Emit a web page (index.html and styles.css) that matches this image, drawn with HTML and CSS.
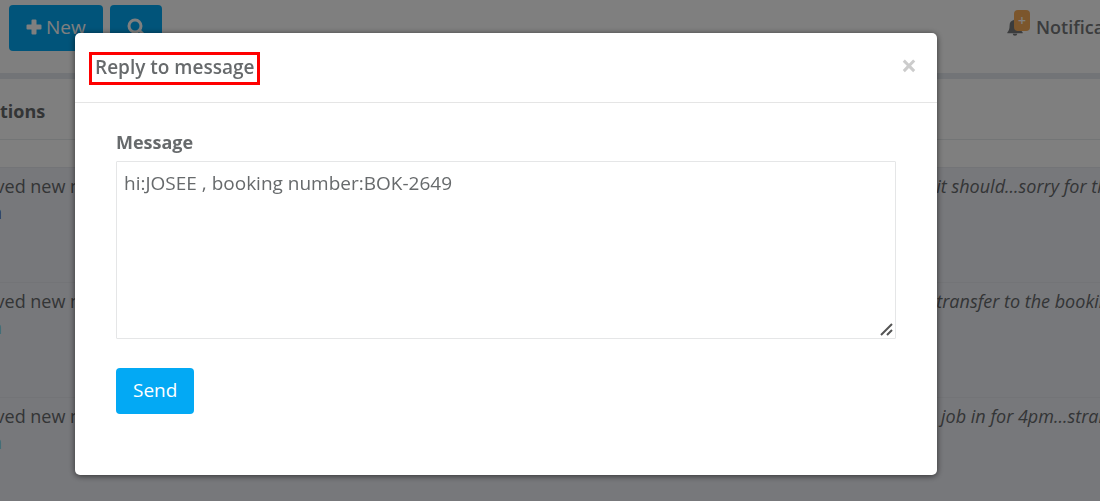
FILE: index.html
```
<!DOCTYPE html>
<html lang="en">
<head>
    <meta charset="UTF-8">
    <meta name="viewport" content="width=device-width, initial-scale=1.0">
    <title>Notifications</title>
    <link rel="stylesheet" href="styles.css">
</head>
<body>
    <div class="page">
        <header class="topbar">
            <div class="toolbar">
                <button type="button" class="btn">
                    <svg class="icon" width="16" height="16" viewBox="0 0 16 16" aria-hidden="true"><path d="M5.500 1.500Q5.500.5 6.500.5h3q1 0 1 1v4h4q1 0 1 1v3q0 1-1 1h-4v4q0 1-1 1h-3q-1 0-1-1v-4h-4q-1 0-1-1v-3q0-1 1-1h4z" fill="currentColor"/></svg>
                    New
                </button>
                <button type="button" class="btn" aria-label="Search">
                    <svg class="icon" width="18" height="18" viewBox="0 0 18 18" aria-hidden="true" fill="none" stroke="currentColor"><circle cx="8" cy="8" r="6" stroke-width="3"/><path d="M12.500 12.500l4 4" stroke-width="3" stroke-linecap="round"/></svg>
                </button>
            </div>
            <a href="#" class="notify">
                <span class="bell">
                    <svg width="18" height="18" viewBox="0 0 18 20" aria-hidden="true"><path d="M9 1c.8 0 1.400.600 1.400 1.300C13.300 2.900 15 5.200 15 8c0 4.500 1 6.500 2.500 7.700V17H.5v-1.300C2 14.500 3 12.500 3 8c0-2.800 1.700-5.100 4.600-5.700C7.600 1.600 8.200 1 9 1zM6.500 17.500h5a2.500 2.300 0 0 1-5 0z" fill="currentColor"/></svg>
                    <span class="badge">+</span>
                </span>
                Notifications
            </a>
        </header>

        <main class="panel">
            <h2 class="panel-title">tions</h2>
            <table class="messages">
                <tbody>
                    <tr>
                        <td>ived new message<br><a href="#" class="seen">n</a></td>
                        <td class="text">- it should...sorry for the</td>
                    </tr>
                    <tr>
                        <td>ived new message<br><a href="#">n</a></td>
                        <td class="text">- transfer to the booking</td>
                    </tr>
                    <tr>
                        <td>ived new message<br><a href="#">n</a></td>
                        <td class="text">n job in for 4pm...straight</td>
                    </tr>
                </tbody>
            </table>
        </main>
    </div>

    <div class="backdrop">
        <div class="modal" role="dialog" aria-modal="true" aria-labelledby="modalTitle">
            <div class="modal-header">
                <h1 id="modalTitle" class="modal-title">Reply to message</h1>
                <button type="button" class="close" aria-label="Close">×</button>
            </div>
            <form class="modal-body">
                <label for="message">Message</label>
                <textarea id="message" name="message">hi:JOSEE , booking number:BOK-2649</textarea>
                <button type="submit" class="btn">Send</button>
            </form>
        </div>
    </div>
</body>
</html>
```

FILE: styles.css
```
* {
    box-sizing: border-box;
}
body {
    margin: 0;
    font-family: "Open Sans", "Noto Sans", sans-serif;
    font-size: 18px;
    line-height: 26px;
    color: #676a6c;
    background: #fff;
}
a {
    color: #7fd0d4;
    text-decoration: none;
}
.page {
    height: 100vh;
    overflow: hidden;
}
.btn {
    display: inline-flex;
    align-items: center;
    gap: 4px;
    padding: 9px 17px 11px;
    border: 0;
    border-radius: 4px;
    background: #03a9f4;
    color: #fff;
    font: inherit;
    font-size: 19px;
    cursor: pointer;
}

/* top bar */
.topbar {
    display: flex;
    justify-content: space-between;
    padding: 5px 0 22px 9px;
    border-bottom: 6px solid #e4e9ef;
}
.toolbar {
    display: flex;
    gap: 7px;
}
.notify {
    display: flex;
    align-items: center;
    gap: 12px;
    width: 94px;
    padding-bottom: 2px;
    font-weight: 600;
    color: #76797b;
}
.bell {
    position: relative;
    height: 18px;
    line-height: 0;
}
.badge {
    position: absolute;
    top: -8px;
    left: 8px;
    width: 16px;
    border-radius: 4px;
    background: #f8ac59;
    color: #fff;
    font-size: 14px;
    line-height: 21px;
    text-align: center;
}

/* message list */
.panel-title {
    margin: 0 0 27px;
    padding: 19px 0 15px;
    border-bottom: 1px solid #e7eaec;
    font-size: 18px;
    line-height: 26px;
}
.messages {
    width: calc(100% + 9px);
    margin-left: -9px;
    border-collapse: collapse;
    table-layout: fixed;
    background: #eff0f7;
}
.messages td {
    height: 115px;
    padding: 5px 0;
    border-top: 1px solid #e7e9ee;
    vertical-align: top;
    white-space: nowrap;
}
.messages .text {
    width: 174px;
    font-style: italic;
}
.messages .seen {
    color: #50547c;
}

/* reply dialog */
.backdrop {
    position: fixed;
    inset: 0;
    padding: 33px 163px 26px 75px;
    background: rgba(0, 0, 0, 0.5);
}
.modal {
    border-radius: 5px;
    background: #fff;
    box-shadow: 0 1px 6px rgba(0, 0, 0, 0.6);
}
.modal-header {
    display: flex;
    justify-content: space-between;
    align-items: flex-start;
    padding: 19px 20px 17px 14px;
    border-bottom: 1px solid #e5e5e5;
}
.modal-title {
    margin: 0;
    padding: 0 3px 2px;
    border: 3px solid #f00;
    font-size: 19px;
    font-weight: 600;
    line-height: 25px;
}
.close {
    padding: 0;
    border: 0;
    background: none;
    color: #ccc;
    font: inherit;
    font-size: 28px;
    font-weight: 700;
    cursor: pointer;
}
.modal-body {
    padding: 27px 41px 61px;
}
.modal-body label {
    display: block;
    margin-bottom: 7px;
    font-weight: 700;
    line-height: 24px;
}
.modal-body textarea {
    display: block;
    width: 100%;
    height: 178px;
    margin-bottom: 29px;
    padding: 8px 7px;
    border: 1px solid #e5e6e7;
    border-radius: 1px;
    outline: none;
    color: inherit;
    font: inherit;
    font-size: 19px;
    resize: vertical;
}
.modal-body textarea::-webkit-resizer {
    background: url("data:image/svg+xml,%3Csvg xmlns='http://www.w3.org/2000/svg' width='15' height='15'%3E%3Cpath d='M1 12L12 1M7 12l5-5' stroke='%23555' stroke-width='2'/%3E%3C/svg%3E") no-repeat right bottom;
}
```
